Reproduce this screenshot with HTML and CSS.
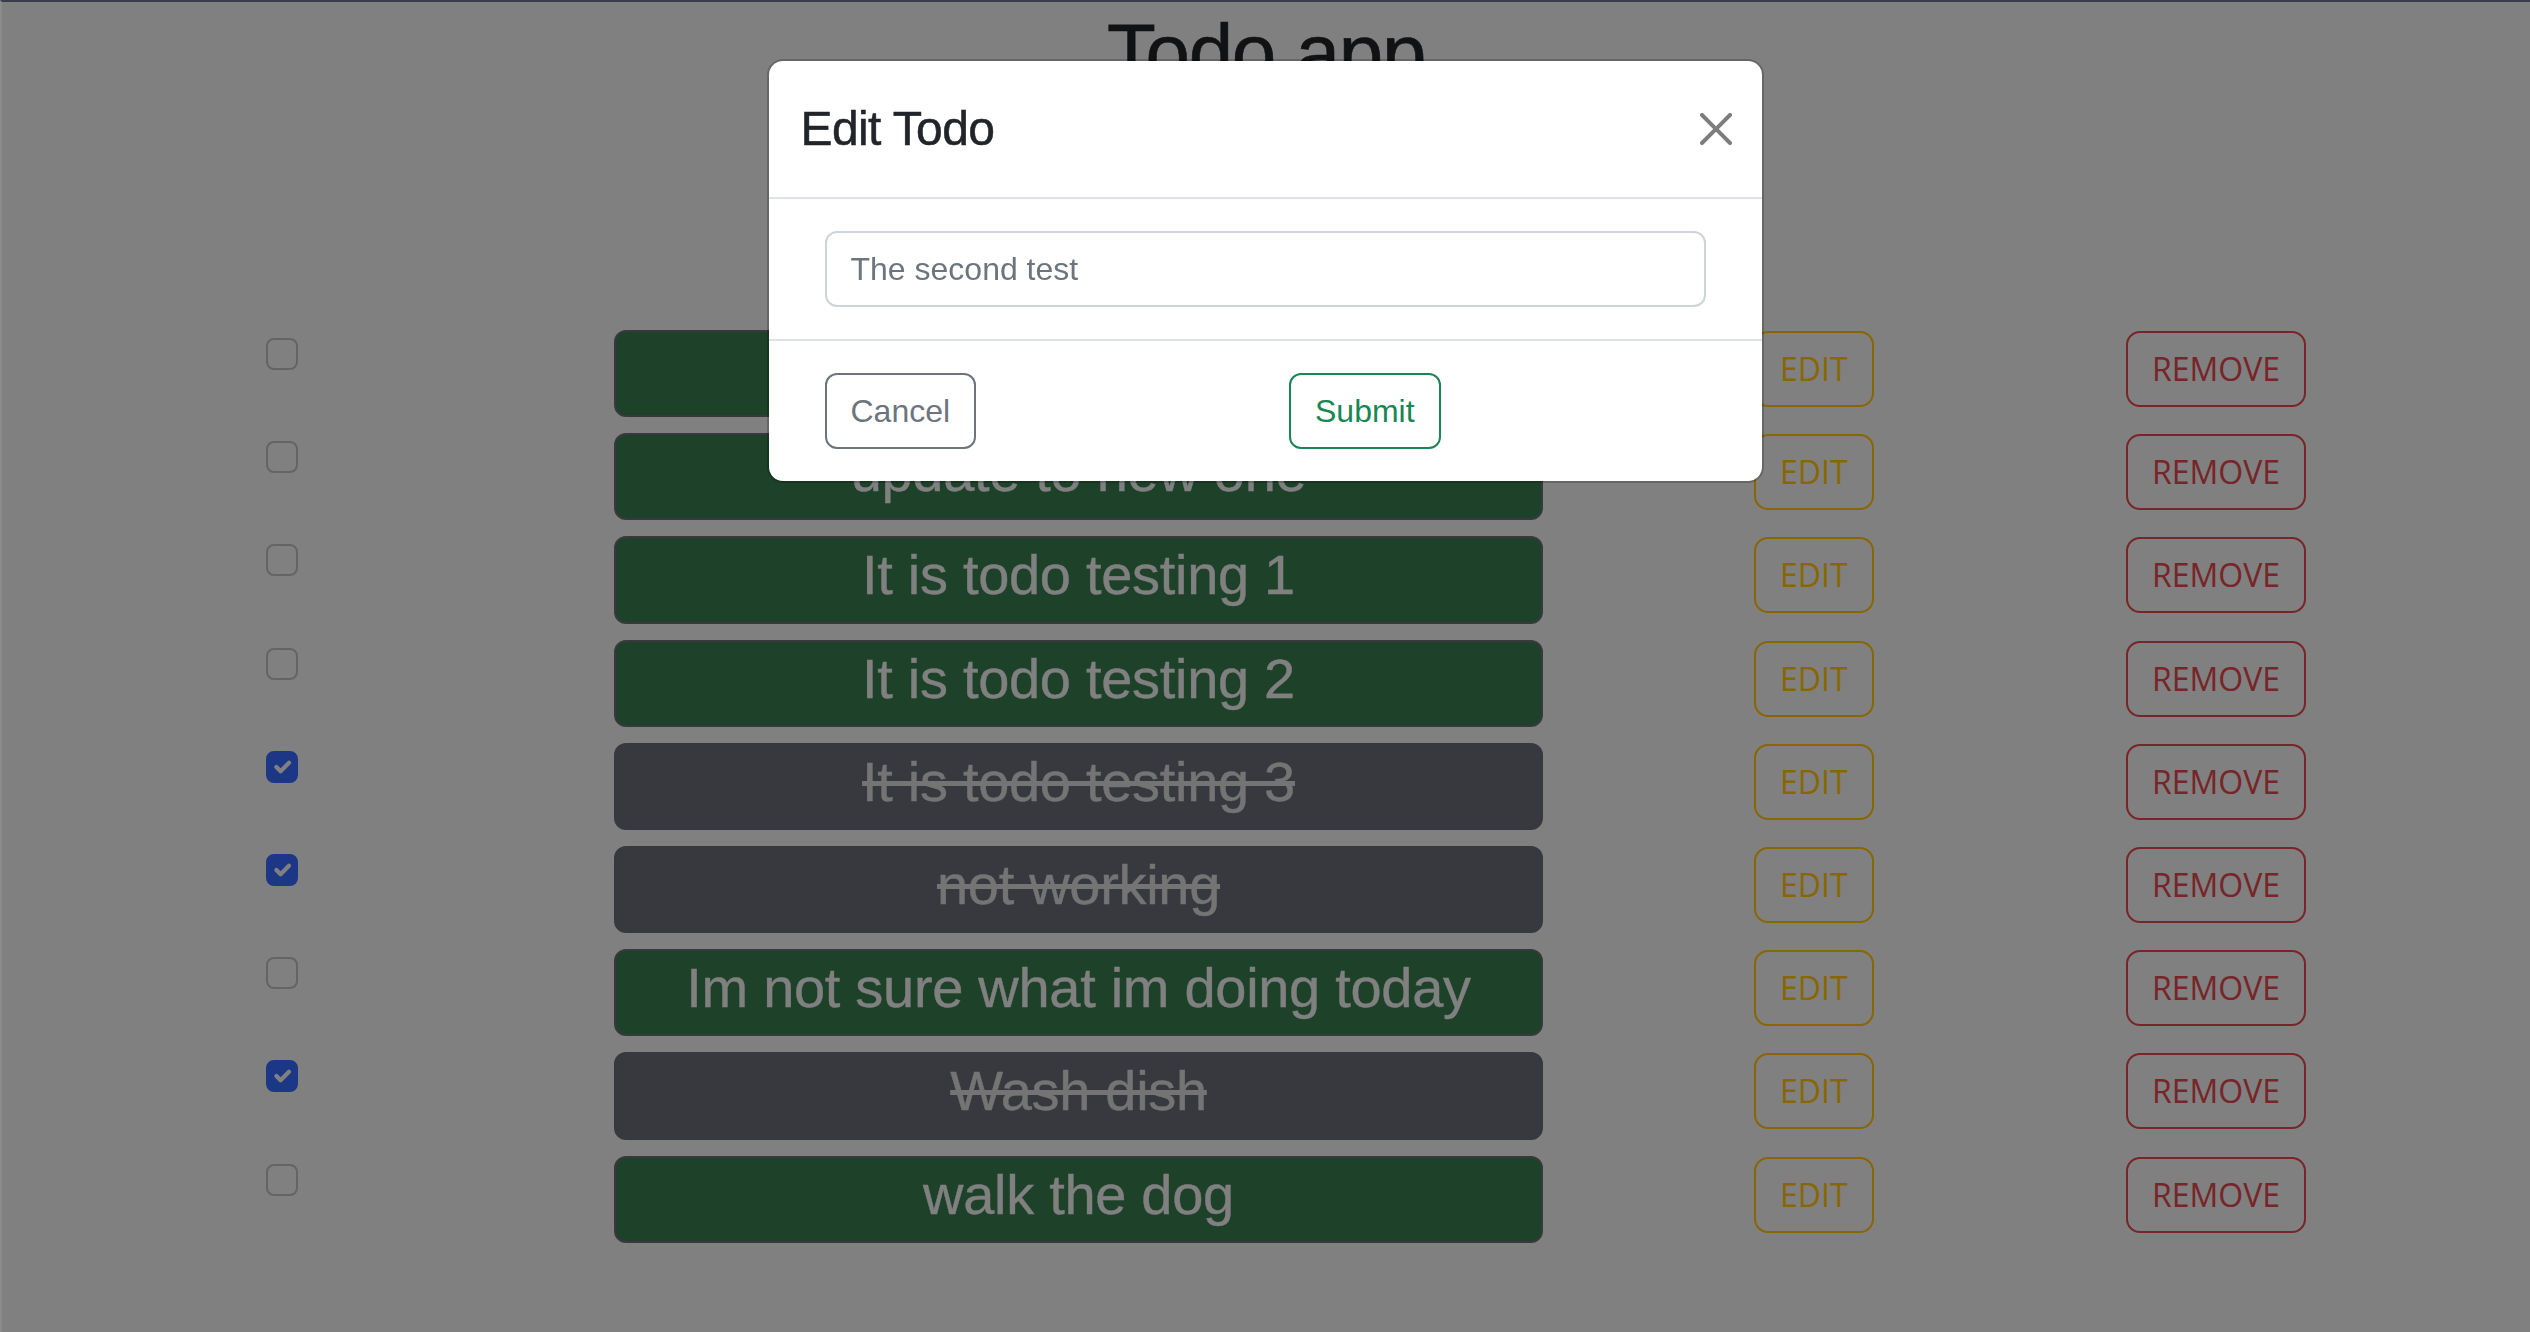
FILE: index.html
```html
<!DOCTYPE html>
<html lang="en">
<head>
<meta charset="utf-8">
<title>Todo app</title>
<link rel="stylesheet" href="styles.css">
</head>
<body>
<div class="app">
  <h1 class="app-title">Todo app</h1>
  <ul class="todo-list">
    <li class="todo-row">
      <span class="check"></span>
      <div class="todo-cell"><div class="todo-bar"><h3 class="todo-text">&nbsp;</h3></div></div>
      <div class="action-cell"><button class="btn btn-edit">EDIT</button></div>
      <div class="action-cell"><button class="btn btn-remove">REMOVE</button></div>
    </li>
    <li class="todo-row">
      <span class="check"></span>
      <div class="todo-cell"><div class="todo-bar"><h3 class="todo-text">update to new one</h3></div></div>
      <div class="action-cell"><button class="btn btn-edit">EDIT</button></div>
      <div class="action-cell"><button class="btn btn-remove">REMOVE</button></div>
    </li>
    <li class="todo-row">
      <span class="check"></span>
      <div class="todo-cell"><div class="todo-bar"><h3 class="todo-text">It is todo testing 1</h3></div></div>
      <div class="action-cell"><button class="btn btn-edit">EDIT</button></div>
      <div class="action-cell"><button class="btn btn-remove">REMOVE</button></div>
    </li>
    <li class="todo-row">
      <span class="check"></span>
      <div class="todo-cell"><div class="todo-bar"><h3 class="todo-text">It is todo testing 2</h3></div></div>
      <div class="action-cell"><button class="btn btn-edit">EDIT</button></div>
      <div class="action-cell"><button class="btn btn-remove">REMOVE</button></div>
    </li>
    <li class="todo-row">
      <span class="check done"><svg viewBox="0 0 20 20"><path d="m6 10 3 3 6-6" fill="none" stroke="#808080" stroke-width="3" stroke-linecap="round" stroke-linejoin="round"/></svg></span>
      <div class="todo-cell"><div class="todo-bar done"><h3 class="todo-text">It is todo testing 3</h3></div></div>
      <div class="action-cell"><button class="btn btn-edit">EDIT</button></div>
      <div class="action-cell"><button class="btn btn-remove">REMOVE</button></div>
    </li>
    <li class="todo-row">
      <span class="check done"><svg viewBox="0 0 20 20"><path d="m6 10 3 3 6-6" fill="none" stroke="#808080" stroke-width="3" stroke-linecap="round" stroke-linejoin="round"/></svg></span>
      <div class="todo-cell"><div class="todo-bar done"><h3 class="todo-text">not working</h3></div></div>
      <div class="action-cell"><button class="btn btn-edit">EDIT</button></div>
      <div class="action-cell"><button class="btn btn-remove">REMOVE</button></div>
    </li>
    <li class="todo-row">
      <span class="check"></span>
      <div class="todo-cell"><div class="todo-bar"><h3 class="todo-text">Im not sure what im doing today</h3></div></div>
      <div class="action-cell"><button class="btn btn-edit">EDIT</button></div>
      <div class="action-cell"><button class="btn btn-remove">REMOVE</button></div>
    </li>
    <li class="todo-row">
      <span class="check done"><svg viewBox="0 0 20 20"><path d="m6 10 3 3 6-6" fill="none" stroke="#808080" stroke-width="3" stroke-linecap="round" stroke-linejoin="round"/></svg></span>
      <div class="todo-cell"><div class="todo-bar done"><h3 class="todo-text">Wash dish</h3></div></div>
      <div class="action-cell"><button class="btn btn-edit">EDIT</button></div>
      <div class="action-cell"><button class="btn btn-remove">REMOVE</button></div>
    </li>
    <li class="todo-row">
      <span class="check"></span>
      <div class="todo-cell"><div class="todo-bar"><h3 class="todo-text">walk the dog</h3></div></div>
      <div class="action-cell"><button class="btn btn-edit">EDIT</button></div>
      <div class="action-cell"><button class="btn btn-remove">REMOVE</button></div>
    </li>
  </ul>
</div>

<div class="modal">
  <div class="modal-dialog">
    <div class="modal-content">
      <div class="modal-header">
        <div class="modal-title">Edit Todo</div>
        <button class="btn-close" aria-label="Close">
          <svg viewBox="0 0 16 16"><path fill="#7d7d7d" d="M.293.293a1 1 0 0 1 1.414 0L8 6.586 14.293.293a1 1 0 1 1 1.414 1.414L9.414 8l6.293 6.293a1 1 0 0 1-1.414 1.414L8 9.414l-6.293 6.293a1 1 0 0 1-1.414-1.414L6.586 8 .293 1.707a1 1 0 0 1 0-1.414z"/></svg>
        </button>
      </div>
      <div class="modal-body">
        <form class="edit-form">
          <input class="form-control" type="text" value="The second test">
        </form>
      </div>
      <div class="modal-footer">
        <div class="footer-col"><button class="btn-cancel" type="button">Cancel</button></div>
        <div class="footer-col"><button class="btn-submit" type="button">Submit</button></div>
      </div>
    </div>
  </div>
</div>
</body>
</html>
```
FILE: styles.css
```css
html, body {
  margin: 0;
  padding: 0;
}

body {
  background: #808080;
  border-top: 2px solid #3a3c4d;
  border-left: 2px solid #8b8b8b;
  min-height: 1332px;
  box-sizing: border-box;
  font-family: "Liberation Sans", Arial, sans-serif;
}

.app-title {
  margin: 3px 0 0;
  text-align: center;
  font-size: 80px;
  line-height: 96px;
  font-weight: 500;
  letter-spacing: -1.4px;
  color: #111214;
  -webkit-text-stroke: 0.6px #111214;
}

.todo-list {
  list-style: none;
  margin: 229px 0 0 264px;
  padding: 0;
  display: flex;
  flex-direction: column;
  gap: 16px;
}

.todo-row {
  display: grid;
  grid-template-columns: 348px 1140px 372px auto;
  align-items: start;
}

.check {
  width: 32px;
  height: 32px;
  margin-top: 8px;
  box-sizing: border-box;
  border: 2px solid #646464;
  border-radius: 8px;
  display: flex;
  align-items: center;
  justify-content: center;
}

.check.done {
  background: #1d3787;
  border-color: #1d3787;
}

.check svg {
  width: 28px;
  height: 28px;
  display: block;
}

.todo-bar {
  width: 929px;
  box-sizing: border-box;
  border: 2px solid #37393e;
  border-radius: 12px;
  background: #1d4229;
  text-align: center;
  padding-top: 3px;
}

.todo-bar.done {
  background: #37393e;
}

.todo-text {
  margin: 0 0 13px;
  font-size: 56px;
  line-height: 1.2;
  font-weight: 500;
  letter-spacing: -0.3px;
  color: #808080;
  -webkit-text-stroke: 0.4px #808080;
}

.todo-bar.done .todo-text {
  text-decoration: line-through;
  color: #747474;
  -webkit-text-stroke: 0.4px #747474;
}

.btn {
  font-family: "Open Sans", sans-serif;
  font-size: 32px;
  line-height: 48px;
  padding: 12px 24px;
  margin-top: 1px;
  border: 2px solid;
  border-radius: 14px;
  background: transparent;
}

.btn-edit {
  color: #886700;
  border-color: #886700;
}

.btn-remove {
  color: #772528;
  border-color: #772528;
}

/* Modal */
.modal {
  position: fixed;
  inset: 0;
}

.modal-dialog {
  width: 997px;
  margin: 59px auto 0;
}

.modal-content {
  background: #fff;
  background-clip: padding-box;
  border: 2px solid rgba(0, 0, 0, 0.2);
  border-radius: 16px;
}

.modal-header {
  display: flex;
  align-items: center;
  padding: 32px;
  border-bottom: 2px solid #dee2e6;
}

.modal-title {
  font-size: 48px;
  line-height: 72px;
  font-weight: 500;
  letter-spacing: -0.6px;
  color: #212529;
  -webkit-text-stroke: 0.5px #212529;
}

.btn-close {
  width: 32px;
  height: 32px;
  padding: 8px;
  box-sizing: content-box;
  border: 0;
  background: none;
  margin: -16px -10px -16px auto;
}

.btn-close svg {
  width: 32px;
  height: 32px;
  display: block;
}

.modal-body {
  padding: 32px;
  border-bottom: 2px solid #dee2e6;
}

.edit-form {
  margin: 0;
  padding: 0 24px;
}

.form-control {
  display: block;
  width: 100%;
  box-sizing: border-box;
  font-family: "Liberation Sans", Arial, sans-serif;
  font-size: 32px;
  line-height: 48px;
  padding: 12px 24px;
  border: 2px solid #ced4da;
  border-radius: 12px;
  color: #6c757d;
  background: #fff;
  outline: none;
}

.modal-footer {
  display: grid;
  grid-template-columns: 1fr 1fr;
  padding: 32px;
}

.footer-col {
  padding: 0 24px;
}

.btn-cancel,
.btn-submit {
  font-family: "Liberation Sans", Arial, sans-serif;
  font-size: 32px;
  line-height: 48px;
  padding: 12px 24px;
  border: 2px solid;
  border-radius: 12px;
  background: #fff;
}

.btn-cancel {
  color: #6c757d;
  border-color: #6c757d;
}

.btn-submit {
  color: #198754;
  border-color: #198754;
}
```
